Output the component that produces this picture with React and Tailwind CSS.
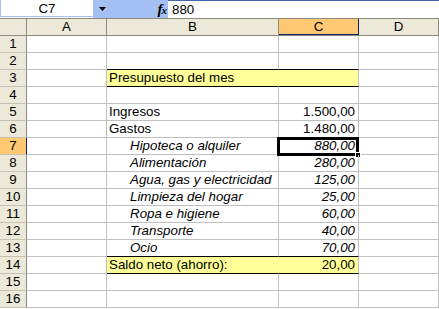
import React from "react";

const rows = [
  { n: 1 },
  { n: 2, bottomBlack: true },
  { n: 3, b: "Presupuesto del mes", yellow: true, bottomBlack: true },
  { n: 4 },
  { n: 5, b: "Ingresos", c: "1.500,00" },
  { n: 6, b: "Gastos", c: "1.480,00" },
  { n: 7, b: "Hipoteca o alquiler", c: "880,00", it: true, sel: true },
  { n: 8, b: "Alimentación", c: "280,00", it: true },
  { n: 9, b: "Agua, gas y electricidad", c: "125,00", it: true },
  { n: 10, b: "Limpieza del hogar", c: "25,00", it: true },
  { n: 11, b: "Ropa e higiene", c: "60,00", it: true },
  { n: 12, b: "Transporte", c: "40,00", it: true },
  { n: 13, b: "Ocio", c: "70,00", it: true, bottomBlack: true },
  { n: 14, b: "Saldo neto (ahorro):", c: "20,00", yellow: true, bottomBlack: true },
  { n: 15 },
  { n: 16 },
];

export default function App() {
  return (
    <div
      className="w-[439px] h-[309px] bg-white overflow-hidden text-[13.33px] text-black"
      style={{ fontFamily: '"Liberation Sans", Arial, sans-serif' }}
    >
      {/* formula bar */}
      <div className="flex h-[18px]">
        <div className="w-[93px] h-[17px] bg-white border-l border-b border-[#A3BFF3] flex items-center justify-center leading-[16px] pt-[1px]">
          C7
        </div>
        <div className="w-[75px] h-[18px] bg-[#A3BFF3] flex items-center justify-between pl-[6px] pr-[2px]">
          <svg width="7" height="4" viewBox="0 0 7 4">
            <path d="M0 0 H7 L3.5 4 Z" fill="#000" />
          </svg>
          <span
            className="italic font-bold text-[15px] leading-[16px] tracking-[-1px]"
            style={{ fontFamily: '"Liberation Serif", serif' }}
          >
            f<span className="text-[11px]">x</span>
          </span>
        </div>
        <div className="flex-1 h-[18px] bg-white border-t border-[#3E6AAA] flex items-center pl-[4px] leading-[16px] pt-[1px]">
          880
        </div>
      </div>

      {/* column headers */}
      <div className="flex h-[18px] bg-[#ECE9D8] border-t border-b border-[#8C8A7E]">
        <div className="w-[27px] border-r border-[#8C8A7E]" />
        <div className="w-[80px] border-r border-[#8C8A7E] flex items-center justify-center leading-[16px]">A</div>
        <div className="w-[172px] border-r border-[#8C8A7E] flex items-center justify-center leading-[16px]">B</div>
        <div className="w-[80px] bg-[#FFC873] border-r border-b border-[#0A246A] flex items-center justify-center leading-[16px]">C</div>
        <div className="w-[80px] border-r border-[#8C8A7E] flex items-center justify-center leading-[16px]">D</div>
      </div>

      {rows.map((r) => (
        <div key={r.n} className="flex h-[17px]">
          <div
            className={`w-[27px] border-b border-r flex items-center justify-center leading-[16px] ${
              r.sel
                ? "bg-[#FFC873] border-r-[#0A246A] border-b-[#C5C2B2]"
                : "bg-[#ECE9D8] border-r-[#8C8A7E] border-b-[#C5C2B2]"
            }`}
          >
            {r.n}
          </div>
          <div className="w-[80px] border-b border-r border-[#C0C0C0]" />
          <div
            className={`w-[172px] border-b border-r flex items-center whitespace-nowrap overflow-visible leading-[16px] ${
              r.yellow ? "bg-[#FFFF99] border-r-[#FFFF99]" : "border-r-[#C0C0C0]"
            } ${r.bottomBlack ? "border-b-black" : "border-b-[#C0C0C0]"} ${
              r.it ? "italic pl-[23px]" : "pl-[2px]"
            }`}
          >
            {r.b}
          </div>
          <div
            className={`relative w-[80px] border-b border-r border-r-[#C0C0C0] flex items-center justify-end pr-[3px] leading-[16px] ${
              r.yellow ? "bg-[#FFFF99]" : ""
            } ${r.bottomBlack ? "border-b-black" : "border-b-[#C0C0C0]"} ${r.it ? "italic" : ""}`}
          >
            {r.c}
            {r.sel && (
              <>
                <div className="absolute left-[-2px] top-[-1px] right-[-1px] bottom-[-2px] border-[3px] border-black" />
                <div className="absolute right-[-3px] bottom-[-4px] w-[6px] h-[6px] bg-black border border-white" />
              </>
            )}
          </div>
          <div className="w-[80px] border-b border-r border-[#C0C0C0]" />
        </div>
      ))}
    </div>
  );
}
